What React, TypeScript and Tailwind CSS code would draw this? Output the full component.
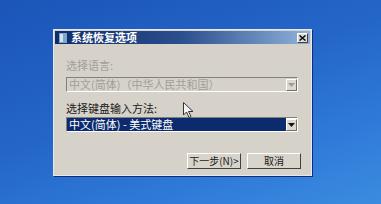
import React from "react";

const font = { fontFamily: '"Noto Sans CJK SC", "Noto Sans", sans-serif' };

function ArrowBox({ disabled }: { disabled?: boolean }) {
  return (
    <div className="w-[11px] h-[12px] flex items-center justify-center bg-[#dcd8d0] border border-t-white border-l-white border-r-[#6f6d68] border-b-[#6f6d68]">
      <svg width="7" height="4" viewBox="0 0 7 4">
        <path d="M0 0h7L3.5 4z" fill={disabled ? "#a09c96" : "#111"} />
      </svg>
    </div>
  );
}

function Combo({ text, selected }: { text: string; selected?: boolean }) {
  return (
    <div
      className={`w-[232px] h-[15px] flex items-center border border-t-[#808080] border-l-[#808080] border-r-white border-b-white ${
        selected ? "bg-white" : "bg-[#d6d2ca]"
      }`}
    >
      <div
        className={`flex-1 h-full flex items-center pl-[2px] text-[11px] leading-none whitespace-nowrap ${
          selected ? "bg-[#0c2a6e] text-white" : "text-[#a29e98]"
        }`}
      >
        {text}
      </div>
      <ArrowBox disabled={!selected} />
    </div>
  );
}

function Button({ label }: { label: string }) {
  return (
    <div className="w-[54px] h-[16px] flex items-center justify-center whitespace-nowrap text-[10px] leading-none text-[#1a1a1a] bg-[#d8d4cc] border border-t-white border-l-white border-r-[#404040] border-b-[#404040]">
      {label}
    </div>
  );
}

export default function App() {
  return (
    <div
      className="w-[381px] h-[204px] overflow-hidden relative bg-[linear-gradient(160deg,#1b55b8_0%,#2466c8_45%,#2f7ad8_75%,#3b8ce0_100%)] pl-[53px] pt-[29px]"
      style={font}
    >
      <div className="w-[259px] h-[147px] flex flex-col bg-[#d6d2ca] border border-[#e8e8f0] shadow-[1px_1px_0_#0d2f7a]">
        <div className="h-[13px] mx-[1px] mt-[1px] flex items-center bg-[linear-gradient(90deg,#0f2b6c_0%,#2c4f8e_50%,#8fb2dc_100%)]">
          <svg width="8" height="10" viewBox="0 0 8 10" className="ml-[4px]">
            <rect x="0" y="0" width="8" height="10" fill="#7fa6c8" />
            <rect x="1" y="1" width="3" height="8" fill="#cfe2f0" />
          </svg>
          <span className="ml-[4px] text-[11px] font-bold text-white leading-none">系统恢复选项</span>
          <div className="ml-auto mr-[2px] w-[11px] h-[10px] flex items-center justify-center bg-[#e0ddd6] border border-t-white border-l-white border-r-[#404040] border-b-[#404040]">
            <svg width="7" height="6" viewBox="0 0 7 6">
              <path d="M0.5 0.5L6.5 5.5M6.5 0.5L0.5 5.5" stroke="#111" strokeWidth="1.6" />
            </svg>
          </div>
        </div>
        <div className="flex flex-col pl-[12px] pt-[16px]">
          <span className="text-[11px] leading-none text-[#a29e98]">选择语言:</span>
          <div className="mt-[6px]">
            <Combo text="中文(简体)（中华人民共和国）" />
          </div>
          <span className="mt-[11px] text-[11px] leading-none text-[#1a1a1a]">选择键盘输入方法:</span>
          <div className="mt-[3px]">
            <Combo text="中文(简体) - 美式键盘" selected />
          </div>
          <div className="mt-[21px] flex gap-[6px] pl-[121px]">
            <Button label="下一步(N)>" />
            <Button label="取消" />
          </div>
        </div>
      </div>
      <svg width="11" height="16" viewBox="0 0 11 16" className="absolute left-[183px] top-[102px]">
        <path d="M0.5 0.5V13L3.5 10L6 15.5L8 14.5L5.5 9.5H10Z" fill="#f4f4f4" stroke="#333" strokeWidth="1" />
      </svg>
    </div>
  );
}
